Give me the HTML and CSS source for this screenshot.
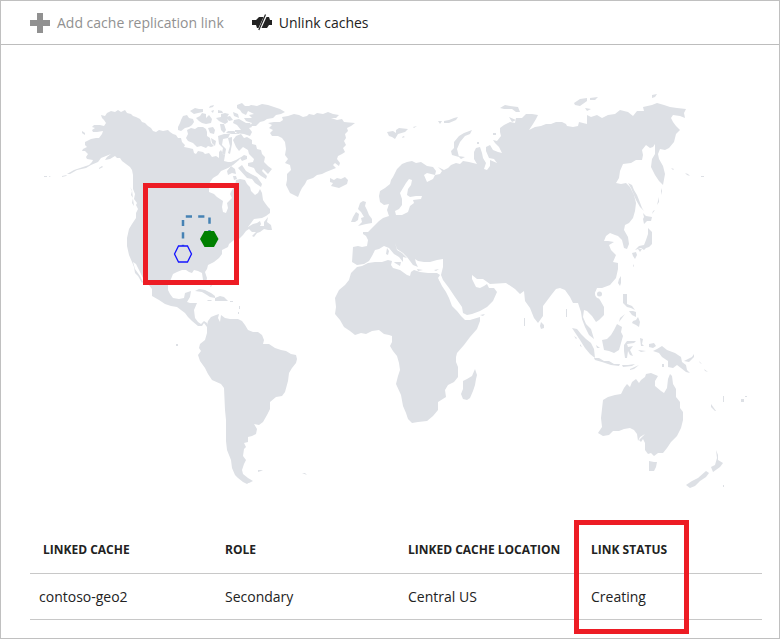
FILE: index.html
```html
<!DOCTYPE html>
<html lang="en">
<head>
<meta charset="utf-8">
<title>Geo-replication</title>
<link rel="stylesheet" href="styles.css">
</head>
<body>
<main class="blade">
  <div class="toolbar">
    <button class="command" type="button" disabled>
      <svg class="icon" viewBox="0 0 20 20" aria-hidden="true"><path d="M7 0h6v7h7v6h-7v7H7v-7H0V7h7z" fill="#919191"/></svg>
      Add cache replication link
    </button>
    <button class="command" type="button">
      <svg class="icon" viewBox="0 0 20 20" aria-hidden="true">
        <path d="M0 7h4l3-3h4.500L6.500 15H5l-1-3H0zM14.500 4H17l1 3h2v5h-3l-2 3H9.500z" fill="#222"/>
        <path d="M13.500 1.500L6.800 17" fill="none" stroke="#222" stroke-width="1.200"/>
      </svg>
      Unlink caches
    </button>
  </div>

  <svg class="map" viewBox="1 45 778 455" role="img" aria-label="Map of linked caches">
    <g class="land">
      <!-- North and Central America -->
      <path d="M101 115L105 116 107 113 111 111 115 112 118 110 121 112 125 110 127 113 131 114 133 116 136 117 140 119 142 122 145 123 148 126 151 128 153 131 156 132 159 130 163 131 168 130 170 132 173 134 176 135 178 138 181 138 182 142 185 145 184 147 189 148 193 149 194 153 196 154 198 151 203 152 205 154 209 153 212 157 216 156 219 158 219 152 221 150 223 154 225 155 224 161 228 162 231 162 236 160 241 157 239 160 233 165 228 168 221 171 218 175 213 178 210 182 209 187 209 192 214 194 217 197 223 201 222 207 223 212 226 213 228 208 227 203 232 198 230 194 232 190 235 186 236 180 240 179 245 180 247 184 250 187 251 191 255 195 258 193 260 189 262 193 263 200 265 203 268 207 270 209 270 213 266 216 262 218 254 219 251 223 248 227 253 224 257 223 260 221 261 224 260 226 264 226 264 222 268 217 267 222 271 225 272 230 268 230 264 229 260 232 257 233 254 237 252 236 256 232 252 232 249 229 246 231 243 235 239 239 234 240 229 244 228 247 222 250 222 254 219 258 214 262 208 265 207 269 205 272 207 278 206 283 203 280 202 273 198 271 194 270 192 273 189 272 186 270 182 270 177 272 173 274 171 279 168 285 168 290 170 294 173 298 179 299 184 298 185 293 191 291 190 297 187 302 190 303 197 303 194 310 195 318 198 322 201 324 204 321 207 323 207 327 204 323 202 326 198 326 192 321 188 317 185 313 181 310 177 307 171 306 165 304 159 300 152 296 152 289 148 284 143 278 140 272 136 264 133 262 135 269 140 276 143 282 142 283 138 276 135 273 134 267 132 262 129 255 127 246 127 238 129 229 132 224 136 218 136 213 138 209 136 205 137 203 134 199 135 194 133 189 133 183 133 175 132 170 130 167 126 164 122 161 120 158 117 158 115 156 110 159 105 160 107 157 111 154 106 156 101 158 98 162 91 165 86 168 77 170 70 174 67 174 74 170 83 167 89 165 92 162 93 160 87 159 86 157 88 154 85 151 82 151 83 149 87 147 85 145 85 142 89 140 91 139 96 138 99 138 102 134 103 131 97 132 93 132 92 130 95 128 92 127 94 125 100 125 104 126 106 123 104 120 102 118z"/>
      <path d="M130 187l2 4-1 4 2 3-1 5 2 3-1-7-1-9zM82 131l3 2 0 2-3-2zM99 168l3-2 1 1-4 2zM62 176l5-1-1 1-4 1zM44 176h3v1h-3zM49 176l2 1h-2z"/>
      <!-- Arctic archipelago -->
      <path d="M178 127l2-4 1-3 2-4 4-1 2 3 4 1 1 3-2 3-3 2-4 1-4 3-3-1zM187 130l4-2 4 1 3-2 5 0 3 2 1 3 0 4 3 2 1 5 3 3-3 1-3-1-2 2-5-2-4 1-4-4-5-2-2-3 2-4zM190 111l5-3 4 1 4 0 0 3-5 1-4 1zM196 118l4-2 2-3 4 1 0 4 3-3 3 4-1 4-5 1-4-1-3-2zM210 106l4-1-1 2-4 1zM211 111l3-1-1 3zM218 110l4 1 1 2-5 0zM216 118l5-1 0-3 4-1 4 1-2 3 1 5-3 2-2-1-4-2zM220 124l4 0 2 6-2 3-3-3zM208 128l5-1 2 3-1 4-4-1zM211 138l5 3-1 5-3-3zM218 136l6-2 6 0-2 4-5 1-1 6 4 4-1 6-3-2 1-5-4-4zM228 138l4-1 0 7-2 10-2-1 2-7zM226 117l4-1 3 4-4 1zM234 120l5-1 7 4 4 0 2 4-3 1 3 4-2 4-6-2-9-1 0-3 6 0-4-5-4-2zM226 133l6 1 7 0-5-3-6 0zM237 105l5-2 3 3 5 0-2 5-2 4-4-2-2-3-3-2zM233 112l5 2 1 4-5-2z"/>
      <path d="M251 105L257 106 262 104 268 105 274 107 280 109 285 112 281 114 276 115 273 118 267 119 264 121 260 122 256 126 250 126 252 123 246 121 244 118 252 118 249 115 254 114 248 111 247 107z"/>
      <path d="M233 140L236 136 241 134 244 138 247 137 252 140 252 144 256 145 257 149 261 150 262 154 265 157 264 162 268 166 272 169 268 174 265 171 263 169 262 171 267 176 266 179 261 176 256 172 254 168 248 166 248 163 253 162 254 159 249 154 248 150 243 147 239 151 236 147zM227 171l4-5 4 3 1 5-4-1-4 2zM233 176l3 0 1 3-3 1zM238 168L242 165 246 171 251 174 257 177 262 184 261 187 255 183 252 179 247 178zM240 158l4-3 3 1 0 3-5 2z"/>
      <!-- Greenland and Iceland -->
      <path d="M268 123L274 122 280 122 283 120 282 117 288 116 294 114 299 115 303 117 307 116 309 114 314 115 317 113 323 114 328 112 333 114 339 115 336 118 331 118 337 120 342 119 344 122 355 123 351 126 347 128 348 131 345 134 346 138 344 141 346 145 343 148 345 152 342 154 338 156 337 159 340 163 339 166 335 163 333 165 336 168 331 170 326 172 322 174 317 175 313 178 307 180 305 184 302 188 300 192 298 197 294 195 290 193 288 189 286 185 287 180 287 174 291 170 290 165 285 163 288 159 285 155 286 149 285 142 282 138 278 136 272 136 270 133 273 130 269 128 272 125zM330 178L334 180 337 178 341 179 345 177 348 180 347 184 343 186 339 188 335 187 331 186 333 183 330 182z"/>
      <!-- Caribbean -->
      <path d="M195 291L199 289 205 290 211 293 215 296 215 298 210 297 207 295 202 292zM207 300l4 0 1 1-4 0zM215 298l5-2 4 1 4 4-6 0-7 0zM230 301h3v1h-3zM210 287l1-3 1 2zM239 306h1v3h-1zM238 312h1v2h-1zM236 320l3 0-1 2zM176 344h2v2h-2z"/>
      <!-- South America -->
      <path d="M207 325L208 321 211 317 216 315 219 314 218 318 220 322 221 315 225 318 230 319 238 319 242 321 245 325 248 330 253 332 258 332 262 335 264 340 263 344 269 344 275 348 281 350 286 351 291 354 296 355 297 359 296 363 292 368 289 373 288 381 285 392 282 396 276 397 270 402 270 409 267 415 263 422 259 425 254 424 257 429 256 434 252 436 248 437 248 442 244 443 246 447 244 449 243 456 246 460 244 464 242 470 243 474 248 478 253 481 249 483 243 482 238 478 235 475 232 468 231 460 227 450 226 441 226 431 226 420 225 410 224 388 221 384 212 380 208 374 205 368 200 361 198 355 201 351 199 348 200 344 205 340 207 333zM258 470l5 0-2 1-3 1zM302 473l3 0 2 2zM246 478l5 3-4 3-4-2z"/>
      <!-- Africa -->
      <path d="M357 267L362 266 368 263 375 262 382 262 388 260 392 261 391 265 393 268 400 270 407 275 410 276 411 272 414 270 420 272 428 273 437 273 440 275 438 278 442 286 446 292 449 298 452 306 457 311 461 316 465 320 470 320 480 317 480 321 477 329 470 337 464 345 457 353 456 357 456 362 458 367 458 377 454 382 448 385 445 390 446 397 438 402 438 410 433 416 427 421 418 422 412 423 408 419 406 413 403 406 401 395 396 384 398 376 400 370 399 363 397 356 393 351 390 346 392 342 392 336 389 335 384 334 379 330 372 331 366 334 361 333 355 335 350 331 344 327 340 320 335 314 336 307 335 298 339 290 345 285 349 280 351 273zM475 369L477 375 476 379 475 385 473 391 470 398 467 400 463 399 461 394 463 389 463 381 467 379 472 376z"/>
      <!-- Europe and Asia -->
      <path d="M353 247L358 246 362 247 367 246 368 240 366 236 363 234 363 232 368 232 371 229 375 225 379 221 383 218 389 216 387 210 389 204 384 205 380 202 379 196 380 191 385 188 390 184 391 180 393 177 397 169 402 164 407 162 412 161 416 163 421 162 427 166 433 167 436 171 435 175 427 173 424 175 427 182 433 179 435 175 440 174 442 171 438 167 444 170 448 168 451 165 456 163 460 164 463 161 469 162 477 164 474 159 474 152 476 148 480 147 482 153 483 158 486 163 484 169 487 170 490 166 490 160 497 163 494 159 489 158 486 151 486 147 490 145 493 150 498 152 502 153 499 147 495 143 493 140 497 141 501 136 500 132 500 128 504 125 510 122 515 123 516 118 522 118 526 114 532 114 538 115 536 119 533 124 529 130 535 127 541 126 546 124 551 124 556 122 562 122 566 124 567 126 573 127 578 126 579 122 587 124 587 115 591 117 597 115 602 118 608 115 615 114 620 110 628 112 633 116 637 111 644 111 643 107 652 105 657 103 664 105 670 107 677 108 686 109 684 113 685 118 680 116 673 115 671 118 673 122 676 126 680 130 676 134 674 142 669 148 665 150 660 149 658 154 659 159 663 166 665 174 663 185 659 181 655 175 651 167 652 159 655 154 655 144 653 147 650 148 646 145 642 150 643 155 642 160 636 160 631 163 623 164 620 171 619 178 616 183 621 184 626 183 630 187 634 195 636 203 635 211 633 218 629 223 625 225 624 230 628 237 629 244 627 249 624 248 622 240 618 236 615 235 610 233 606 236 604 241 608 241 614 242 609 245 611 250 616 255 613 262 618 263 618 269 616 278 610 285 602 288 597 288 595 293 600 300 604 307 604 315 599 320 596 322 592 316 587 311 584 310 583 317 586 324 591 329 594 339 589 335 585 327 582 319 581 312 578 303 573 303 570 297 565 290 560 288 556 289 552 294 546 302 543 306 543 316 538 323 534 318 530 308 525 301 524 291 520 294 515 289 506 283 490 284 483 279 477 279 472 275 472 279 476 287 480 288 484 286 487 284 489 288 494 288 497 292 493 301 487 307 480 311 472 314 467 315 463 313 462 307 455 297 449 288 443 280 441 275 443 267 443 259 437 260 430 262 424 262 418 261 415 259 416 263 418 267 413 265 410 261 407 257 403 253 397 249 395 243 397 250 402 253 407 258 403 257 403 262 399 257 394 254 389 248 384 246 379 249 375 250 372 256 369 261 364 264 357 265 352 262z"/>
      <path d="M360 203l3-2 3 1-1 4 2 4 2 5 3 4 0 4-6 1-8 2 4-4-1-4 3-1-3-5-3-3zM351 222l2-5 3-5 3 2-1 6-3 2zM394 262l7 0-1 4-5-3zM387 248l2 3-1 4-2-1zM417 269l6 1-5 1zM434 270l5-1-3 2z"/>
      <path d="M387 132l6-1 3 2 0-3 3-2 9 1-3 3-7 2-3 5-3-2-3-1zM403 136l2 1-3 1zM413 127l4-1-3 2zM438 121l4 0-2 3zM444 121l5-1 5-2 4-1-2 3-7 3-5 0zM472 130L470 134 465 136 460 142 457 149 459 157 452 155 451 151 454 148 454 142 459 136 464 133zM458 156l7 1-4 2zM500 108L505 105 510 106 518 107 520 112 516 112 512 109 504 109zM574 103l6-4 7-1 0 3-7 5-5-1zM590 98l8-1-3 3-5 0zM585 108l6 1-4 2zM652 95l5-1-2 3-3 1zM509 117l7 3-4 2zM493 133h3v2h-3zM477 142h2v2h-2z"/>
      <!-- Sakhalin, Japan, Taiwan and island chains -->
      <path d="M628 183L632 185 634 190 637 195 639 200 642 208 644 211 640 207 636 200 633 193 631 188zM643 213l3 3 6 1-1 4-4 0-3 3-1-5 1-2zM648 228l4 4 0 6 0 6-3 3-3 1-2 2-3-2-6 2 4-4 5-1 2-5 2-6zM632 253l4-1 1 3-2 4-2-3zM638 249l4 0-2 3zM661 188l1 3-1 4zM659 197l0 5-2 3zM655 210l-3 4 1-3zM671 168l3 1-1 1zM685 173l3 1 2 2-3-1zM701 176h3v1h-3zM619 279l2-3 0 7-1 3-2-3zM541 322l3 3 0 3-3 1-1-3zM566 309h1v8h-1zM633 264l1 2-1 1zM480 315l5-1-2 2zM524 318v8h1v-8z"/>
      <!-- Maritime Southeast Asia -->
      <path d="M572 328L577 329 581 334 586 339 591 343 594 349 595 358 590 354 585 348 580 340 576 334zM594 358L599 358 604 361 609 361 614 364 620 364 619 366 611 365 602 362 595 360zM622 365l6 0 7-1-3 2-9 1zM630 369l9-4-5 4-4 1zM602 340L607 339 611 335 614 330 617 324 622 327 621 332 623 336 621 343 619 350 614 353 609 351 604 350zM624 345l3-4 9 0-2 2-7 1 1 3 5-1-3 4 3 6-3-1-2-4-1 7-2 0-1-7zM623 294l4 0 0 6 0 4 5 2 3 4-4-2-4-1-4-4zM629 311l4 0 3 1 0 5-4-2zM633 321l3-1 2-3 2 5-1 5-3-2-4-2zM625 314l-6 8 1-4zM640 338l3 1-1 5 2 2-3 0zM638 350l8 1-5 1zM649 344l5-1 2 3-3 2-4-1zM653 351L657 349 662 346 667 350 675 353 681 357 682 362 686 365 687 370 690 373 686 372 681 368 677 365 673 368 668 367 668 361 662 357 659 353zM684 361l8-4 2-3 0 3-5 5zM662 364h2v3h-2zM574 336l3 2-1 1zM580 344l2 3-2-1zM699 361l3 3-2-1zM704 369l4 3-3-1zM709 376l2 1zM596 345l4 3-3 0z"/>
      <!-- Australia and New Zealand -->
      <path d="M603 400L608 397 615 395 621 394 624 388 627 384 630 387 632 382 636 379 639 383 641 380 645 377 646 374 651 373 658 376 655 381 655 386 661 391 664 393 667 388 668 379 670 374 672 376 673 384 676 389 676 397 680 402 680 408 683 412 683 420 681 428 677 436 671 442 667 448 663 453 658 453 654 456 651 453 648 454 645 450 645 443 643 439 641 442 639 440 645 434 640 437 638 441 637 434 634 430 630 428 624 429 619 431 613 431 609 435 603 436 598 433 602 427 601 418zM649 461l5 1 3 0-1 5-2 4-5 0zM716 450L718 455 718 460 723 463 720 467 713 472 711 467 715 465 717 458zM706 471L709 473 706 477 700 481 695 486 690 488 686 485 692 481 698 478zM711 404l5 7-1 0-4-4zM741 399h3v3h-3zM745 396h2v1h-2zM723 396v6h1v-6zM723 485h1v2h-1z"/>
    </g>
    <!-- Baltic Sea, gulfs and the strait around Hainan -->
    <g class="water">
      <path d="M409 179L412 180 411 185 408 189 407 195 410 197 416 196 422 196 421 199 413 200 414 203 410 206 408 212 402 215 396 215 395 211 399 209 402 205 402 199 400 193 403 188 406 183z"/>
      <path d="M439 277l3 6-3-3z"/>
    </g>
    <path class="strait" d="M596 294a3.500 3.500 0 1 1 7 0a3.500 3.500 0 1 1-7 0"/>
    <path class="replication-link" d="M183 254V216.500H209.500V239"/>
    <path class="region region-secondary" d="M174.500 254l4-8h9l4 8-4 8h-9z"/>
    <path class="region region-primary" d="M200 239l4.500-8h9.500l4.500 8-4.500 8h-9.500z"/>
    <rect class="callout" x="145.500" y="185.500" width="91" height="97"/>
  </svg>

  <div class="links">
    <table class="link-table">
      <thead>
        <tr><th scope="col">LINKED CACHE</th><th scope="col">ROLE</th><th scope="col">LINKED CACHE LOCATION</th><th scope="col">LINK STATUS</th></tr>
      </thead>
      <tbody>
        <tr><td>contoso-geo2</td><td>Secondary</td><td>Central US</td><td>Creating</td></tr>
      </tbody>
    </table>
    <div class="status-callout"></div>
  </div>
</main>
</body>
</html>
```
FILE: styles.css
```css
* {
  box-sizing: border-box;
}

body {
  margin: 0;
  background: #fff;
  color: #222;
  font-family: "Open Sans", "Noto Sans", sans-serif;
  font-size: 14px;
}

.blade {
  min-height: 100vh;
  border: 1px solid #c0c0c0;
}

.toolbar {
  display: flex;
  gap: 28px;
  height: 44px;
  padding: 0 29px;
  border-bottom: 1px solid #bdbdbd;
}

.command {
  display: flex;
  align-items: center;
  gap: 7px;
  padding: 0;
  border: 0;
  background: none;
  color: #222;
  font: inherit;
  white-space: nowrap;
}

.command:disabled {
  color: #919191;
}

.icon {
  width: 20px;
  height: 20px;
}

.map {
  display: block;
  width: 100%;
}

.land {
  fill: #dde0e5;
}

.water {
  fill: #fff;
}

.strait {
  fill: #dde0e5;
  stroke: #fff;
  stroke-width: 2;
}

.replication-link {
  fill: none;
  stroke: #4682b4;
  stroke-width: 2.5;
  stroke-dasharray: 6.2;
  stroke-dashoffset: -3.1;
}

.region-secondary {
  fill: #dde0e5;
  stroke: #1414ff;
  stroke-width: 1.3;
}

.region-primary {
  fill: #008000;
}

.callout {
  fill: none;
  stroke: #ed1c24;
  stroke-width: 5;
}

.links {
  position: relative;
  margin: 24px 17px 18px 29px;
}

.link-table {
  width: 100%;
  table-layout: fixed;
  border-collapse: collapse;
}

.link-table th,
.link-table td {
  padding: 0 12px;
  border-bottom: 1px solid #c8c8c8;
  text-align: left;
  white-space: nowrap;
}

.link-table th {
  height: 49px;
  padding-top: 2px;
  font-size: 12px;
  font-weight: 700;
}

.link-table td {
  height: 46px;
}

.link-table th:first-child {
  padding-left: 13px;
}

.link-table td:first-child {
  padding-left: 9px;
}

.status-callout {
  position: absolute;
  top: -4px;
  bottom: -14px;
  left: calc(75% - 5px);
  width: 115px;
  border: 5px solid #ed1c24;
}
```
